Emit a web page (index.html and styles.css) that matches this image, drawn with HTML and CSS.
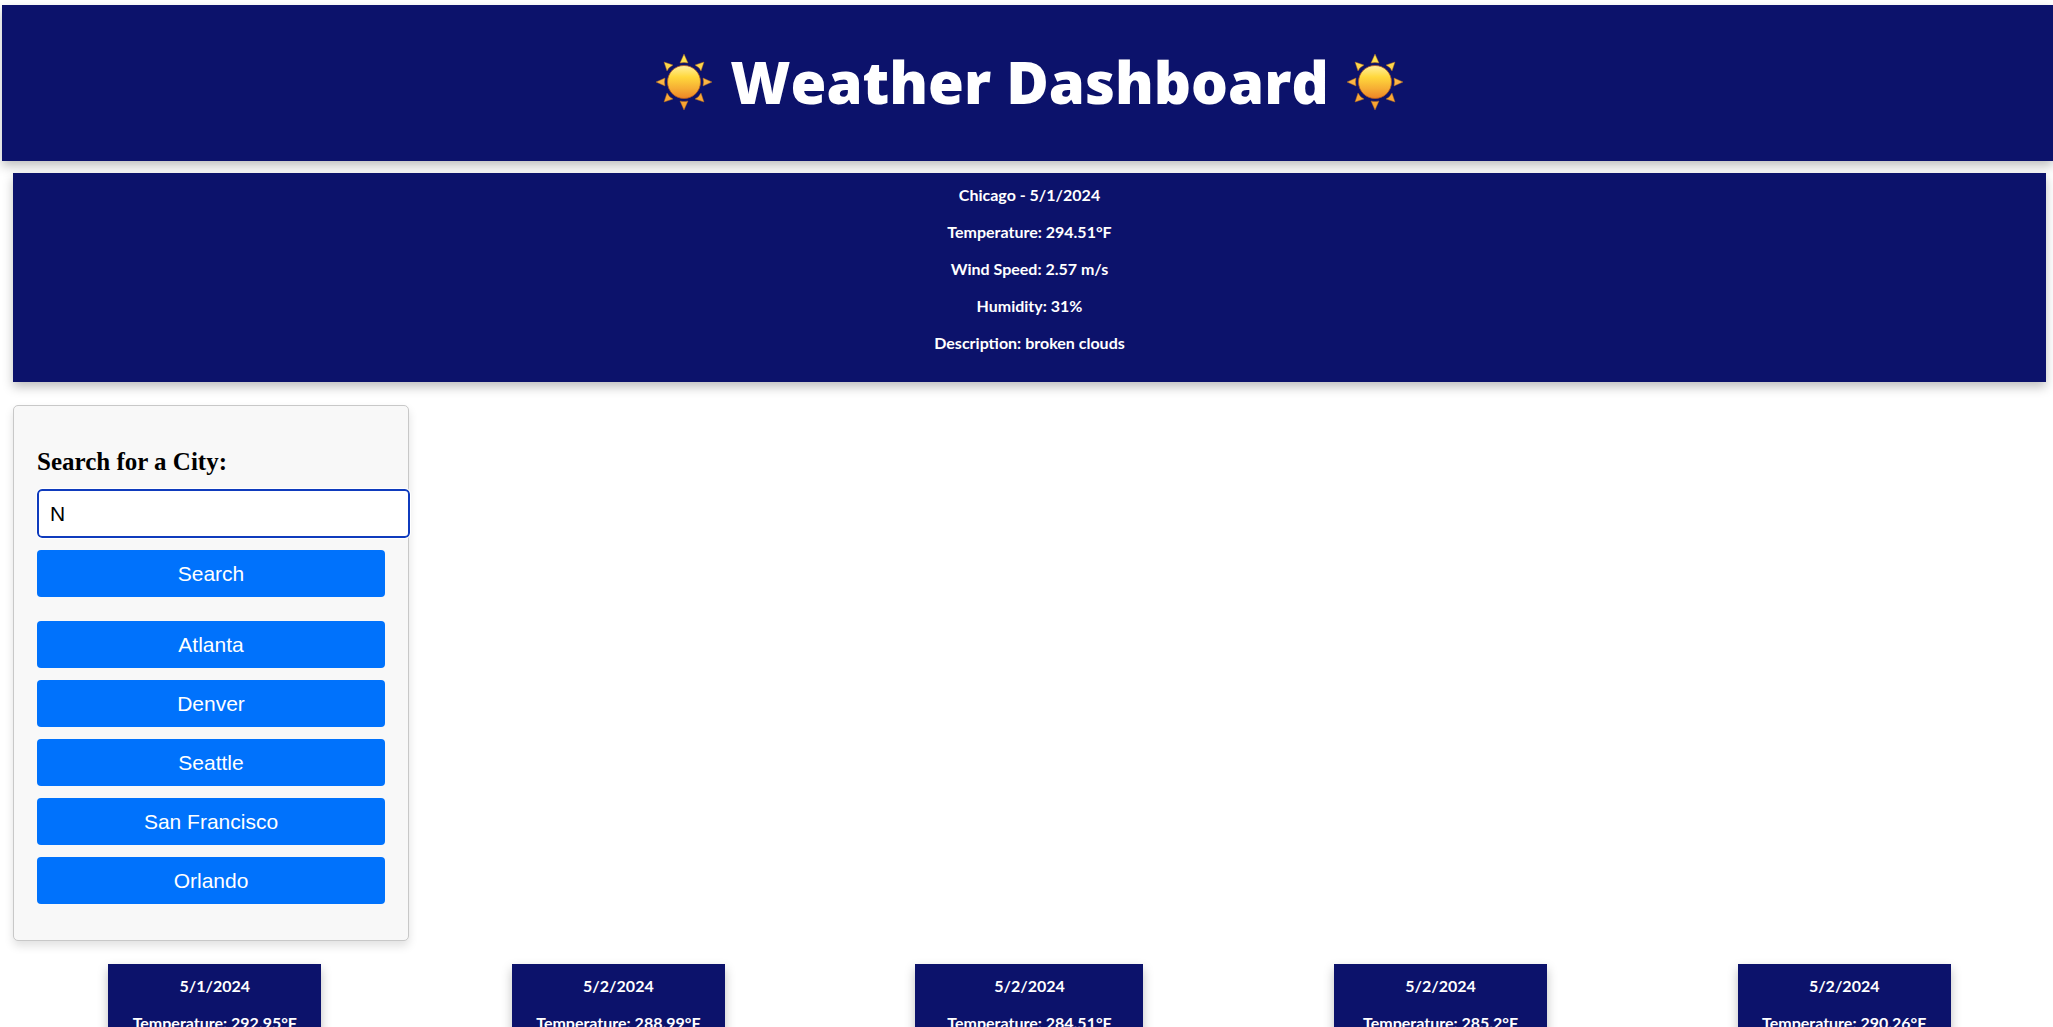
FILE: index.html
```
<!DOCTYPE html>
<html lang="en">
<head>
<meta charset="utf-8">
<title>Weather Dashboard</title>
<link rel="stylesheet" href="styles.css">
</head>
<body>
<svg class="defs" width="0" height="0" aria-hidden="true">
  <defs>
    <linearGradient id="disc" x1="0" y1="0" x2="0" y2="1">
      <stop offset="0" stop-color="#fff0a0"/><stop offset=".35" stop-color="#ffd83c"/><stop offset=".7" stop-color="#f6ae34"/><stop offset="1" stop-color="#ee8426"/>
    </linearGradient>
    <linearGradient id="rays" gradientUnits="userSpaceOnUse" x1="0" y1="-28" x2="0" y2="28">
      <stop offset="0" stop-color="#ffee50"/><stop offset=".5" stop-color="#fbb545"/><stop offset="1" stop-color="#f9a02c"/>
    </linearGradient>
    <symbol id="sun" viewBox="-28 -28 56 56">
      <path fill="url(#rays)" stroke="#a86420" stroke-width=".5" d="M0-28 4-19Q0-20-4-19ZM0 28 4 19Q0 20-4 19ZM-28 0-19-4Q-20 0-19 4ZM28 0 19-4Q20 0 19 4ZM-20-20-11-17Q-15-15-17-11ZM20-20 11-17Q15-15 17-11ZM-20 20-11 17Q-15 15-17 11ZM20 20 11 17Q15 15 17 11Z"/>
      <circle r="16.5" fill="url(#disc)" stroke="#b35a22" stroke-width=".8"/>
    </symbol>
  </defs>
</svg>
<header class="banner">
  <svg class="sun" aria-hidden="true"><use href="#sun"/></svg>
  <h1 class="title">Weather Dashboard</h1>
  <svg class="sun" aria-hidden="true"><use href="#sun"/></svg>
</header>
<main class="content">
  <section class="weather">
    <p>Chicago - 5/1/2024</p>
    <p>Temperature: 294.51°F</p>
    <p>Wind Speed: 2.57 m/s</p>
    <p>Humidity: 31%</p>
    <p>Description: broken clouds</p>
  </section>
  <aside class="search">
    <form class="search-form">
      <label class="label" for="city">Search for a City:</label>
      <input class="field" id="city" type="text" value="N" autocomplete="off">
      <button class="button" type="button">Search</button>
    </form>
    <div class="history">
      <button class="button" type="button">Atlanta</button>
      <button class="button" type="button">Denver</button>
      <button class="button" type="button">Seattle</button>
      <button class="button" type="button">San Francisco</button>
      <button class="button" type="button">Orlando</button>
    </div>
  </aside>
  <section class="forecast">
    <article class="weather card"><p>5/1/2024</p><p>Temperature: 292.95°F</p></article>
    <article class="weather card"><p>5/2/2024</p><p>Temperature: 288.99°F</p></article>
    <article class="weather card card-wide"><p>5/2/2024</p><p>Temperature: 284.51°F</p></article>
    <article class="weather card"><p>5/2/2024</p><p>Temperature: 285.2°F</p></article>
    <article class="weather card"><p>5/2/2024</p><p>Temperature: 290.26°F</p></article>
  </section>
</main>
</body>
</html>
```
FILE: styles.css
```
* { box-sizing: border-box; }
body {
  margin: 0;
  height: 100vh;
  overflow: hidden auto;
  scrollbar-width: none;
  background: #fff;
}
.defs { position: absolute; }
.banner {
  display: flex;
  justify-content: center;
  align-items: center;
  gap: 18px;
  margin: 5px 0 12px 2px;
  padding: 40px 0 42px 4px;
  background: #0c126b;
  box-shadow: 0 5px 10px rgba(0, 0, 0, .25);
}
.title {
  margin: 0;
  color: #fff;
  font: 800 58px/74px "Open Sans", sans-serif;
}
.sun { width: 56px; height: 56px; }
.content { padding: 0 7px 0 13px; }
.weather {
  padding: 12px;
  background: #0c126b;
  color: #fff;
  box-shadow: 0 5px 10px rgba(0, 0, 0, .25);
  font: 700 16px/19px Lato, sans-serif;
  text-align: center;
}
.weather p { margin: 0 0 18px; }
.search {
  width: 396px;
  margin: 23px 0;
  padding: 41px 23px 36px;
  border: 1px solid #c8c8c8;
  border-radius: 5px;
  background: #f8f8f8;
  box-shadow: 0 5px 10px rgba(0, 0, 0, .12);
}
.search-form, .history {
  display: flex;
  flex-direction: column;
  gap: 12px;
}
.history { margin-top: 24px; }
.label {
  color: #000;
  font: 700 25px/30px "Liberation Serif", serif;
}
.field {
  width: calc(100% + 25px);
  height: 49px;
  padding: 0 11px;
  border: 2px solid #0f3bbd;
  border-radius: 5px;
  outline: 1px solid #fff;
  background: #fff;
  color: #000;
  font: 21px "Liberation Sans", sans-serif;
}
.button {
  height: 47px;
  padding: 0;
  border: 0;
  border-radius: 4px;
  background: #0072fc;
  color: #fff;
  font: 21px "Liberation Sans", sans-serif;
}
.forecast {
  display: flex;
  justify-content: space-around;
}
.card { width: 213px; min-height: 208px; }
.card-wide { width: 228px; }
```
